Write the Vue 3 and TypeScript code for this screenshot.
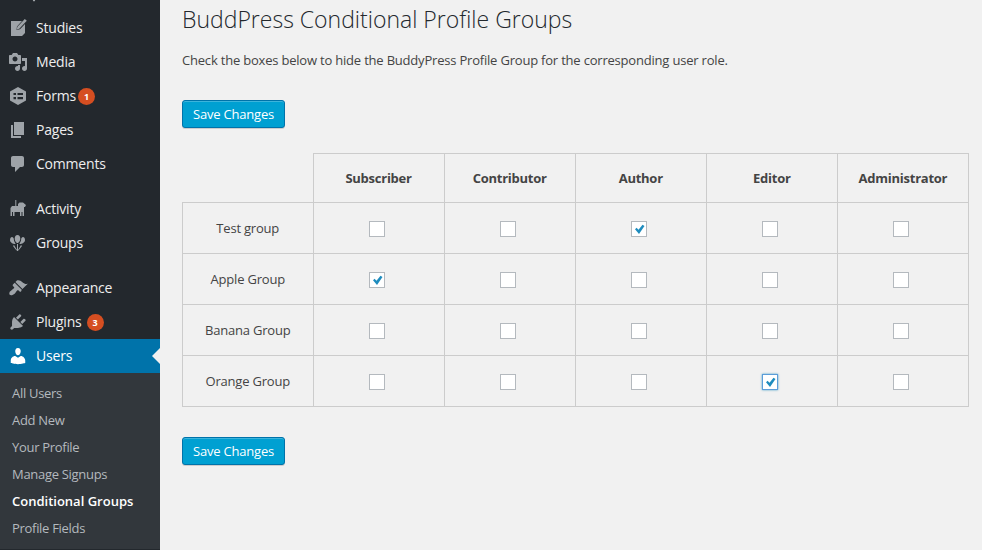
<template>
  <div class="page">
    <aside class="sidebar">
      <div class="menu-top">
        <svg class="cut-icon" viewBox="0 0 20 20"><path d="M3 0h14v8H3z" /></svg>
      </div>

      <nav v-for="(group, g) in menu" :key="g" class="menu-group">
        <a v-for="item in group" :key="item.label" class="menu-item" :class="{ current: item.current }">
          <svg class="menu-icon" viewBox="0 0 20 20"><path :d="item.icon" /></svg>
          <span class="label">{{ item.label }}</span>
          <span v-if="item.badge" class="badge" :class="{ tight: item.tight }">{{ item.badge }}</span>
        </a>
      </nav>

      <ul class="submenu">
        <li v-for="sub in subItems" :key="sub" :class="{ active: sub === 'Conditional Groups' }">{{ sub }}</li>
      </ul>
    </aside>

    <main class="content">
      <h1>BuddPress Conditional Profile Groups</h1>
      <p>Check the boxes below to hide the BuddyPress Profile Group for the corresponding user role.</p>
      <button class="save" type="button">Save Changes</button>

      <table>
        <thead>
          <tr>
            <th class="corner"></th>
            <th v-for="role in roles" :key="role">{{ role }}</th>
          </tr>
        </thead>
        <tbody>
          <tr v-for="row in rows" :key="row.name">
            <td class="name">{{ row.name }}</td>
            <td v-for="(role, i) in roles" :key="role">
              <span class="check" :class="{ focused: row.focus === i }">
                <svg v-if="row.checked === i" viewBox="0 0 16 16"><path d="M4 8.2L5.6 6.800 7.500 8.700 11.500 3.800 13.500 5 8 13z" /></svg>
              </span>
            </td>
          </tr>
        </tbody>
      </table>

      <button class="save" type="button">Save Changes</button>
    </main>
  </div>
</template>

<script setup lang="ts">
interface MenuItem {
  label: string;
  icon: string;
  badge?: number;
  tight?: boolean;
  current?: boolean;
}

interface Row {
  name: string;
  checked?: number;
  focus?: number;
}

const menu: MenuItem[][] = [
  [
    {
      label: 'Studies',
      icon: 'M3 3h11l-5 5.5-.5 3.5 3.5-.8L17 6v9l-3 3H3zM16.8 1l2 1.8-7.5 8-2.5.7.6-2.700z',
    },
    {
      label: 'Media',
      icon: 'M13 11V4c0-.55-.45-1-1-1h-1.67L9 1H5L3.67 3H2c-.55 0-1 .45-1 1v7c0 .55.45 1 1 1h10c.55 0 1-.45 1-1zM7 4.5c1.38 0 2.5 1.12 2.5 2.5S8.38 9.5 7 9.5 4.5 8.38 4.5 7 5.62 4.5 7 4.5zM14 6h5v10.5c0 1.38-1.12 2.5-2.5 2.5S14 17.88 14 16.5s1.12-2.5 2.5-2.5c.17 0 .34.02.5.05V9h-3V6zm-4 8.05V13h2v3.5c0 1.38-1.12 2.5-2.5 2.5S7 17.88 7 16.5 8.12 14 9.5 14c.17 0 .34.02.5.05z',
    },
    {
      label: 'Forms',
      icon: 'M10 1l8 4.5v9L10 19l-8-4.5v-9zM5.5 7v2H8V7zM9.5 7v2H15V7zM5.5 11v2.2H8V11zM9.5 11v2.2H15V11z',
      badge: 1,
      tight: true,
    },
    { label: 'Pages', icon: 'M6 15V2h10v13H6zm-1 1h8v2H3V5h2v11z' },
    {
      label: 'Comments',
      icon: 'M5 2h9c1.1 0 2 .9 2 2v7c0 1.1-.9 2-2 2h-2l-5 5v-5H5c-1.1 0-2-.9-2-2V4c0-1.1.9-2 2-2z',
    },
  ],
  [
    {
      label: 'Activity',
      icon: 'M7.3 1h1v6H10V5l1.5-1.5H15l3 2.500-1 2H16V17h-1.500v-4h-1v4H12v-4H6.500v4H5v-4H4v4H2.500V9L4 7h3.300z',
    },
    {
      label: 'Groups',
      icon: 'M9.5 2c1.800 0 2.800 1.700 2.800 3.500S11 10 9.500 10 6.700 7.300 6.700 5.500 7.700 2 9.500 2zM4 4c1 0 1.800 1 1.800 2 0 1.800 1 3.600 1.800 4.500l-.4.600C5 11 2 9.500 2 7c0-1.700 1-3 2-3zM15 4c-1 0-1.800 1-1.800 2 0 1.800-1 3.600-1.800 4.500l.4.600C14 11 17 9.500 17 7c0-1.700-1-3-2-3zM9 11h1v7H9zM6 12l3 5-.5.5L5 13zM13 12l-3 5 .5.5L14 13z',
    },
  ],
  [
    {
      label: 'Appearance',
      icon: 'M14.48 11.06L7.41 3.99l1.5-1.5c.5-.56 2.3-.47 3.51.32 1.21.8 1.43 1.28 2.91 2.1 1.18.64 2.45 1.26 4.45.85zm-.71.71L6.7 4.7 4.93 6.47c-.39.39-.39 1.02 0 1.41l1.06 1.06c.39.39.39 1.03 0 1.42-.6.6-1.43 1.11-2.21 1.69-.35.26-.7.53-1.01.84C1.43 13.23.78 15.82 1.75 16.79c.97.97 3.53.31 4.88-1.04.31-.31.58-.66.85-1.02.57-.78 1.08-1.61 1.69-2.21.39-.39 1.02-.39 1.41 0l1.06 1.06c.39.39 1.02.39 1.41 0z',
    },
    {
      label: 'Plugins',
      icon: 'M13.11 4.36L9.87 7.6 8 5.73l3.24-3.24c.35-.34 1.05-.2 1.56.32.52.51.66 1.21.31 1.55zm-8 1.77l.91-1.12 9.01 9.01-1.19.84c-.71.71-2.63 1.16-3.82 1.16H6.14L4.9 17.26c-.59.59-1.54.59-2.12 0-.59-.58-.59-1.53 0-2.12l1.24-1.24v-3.88c0-1.13.4-3.19 1.09-3.89zm7.26 3.97l3.24-3.24c.34-.35 1.04-.21 1.55.31.52.51.66 1.21.31 1.55l-3.24 3.25z',
      badge: 3,
    },
    {
      label: 'Users',
      icon: 'M10 9.25c-2.27 0-2.73-3.44-2.73-3.44C7 4.02 7.82 2 9.97 2c2.16 0 2.98 2.02 2.71 3.81 0 0-.41 3.44-2.68 3.44zm0 2.57L12.72 10c2.39 0 4.52 2.33 4.52 4.53v2.49s-3.65 1.13-7.24 1.13c-3.65 0-7.24-1.13-7.24-1.13v-2.49c0-2.25 1.94-4.48 4.47-4.48z',
      current: true,
    },
  ],
];

const subItems = ['All Users', 'Add New', 'Your Profile', 'Manage Signups', 'Conditional Groups', 'Profile Fields'];

const roles = ['Subscriber', 'Contributor', 'Author', 'Editor', 'Administrator'];

const rows: Row[] = [
  { name: 'Test group', checked: 2 },
  { name: 'Apple Group', checked: 0 },
  { name: 'Banana Group' },
  { name: 'Orange Group', checked: 3, focus: 3 },
];
</script>

<style>
html,
body {
  margin: 0;
  overflow: hidden;
  background: #f1f1f1;
}
</style>

<style scoped>
.page {
  display: flex;
  height: 550px;
  overflow: hidden;
  font-family: 'Open Sans', 'Liberation Sans', sans-serif;
  font-size: 13px;
  letter-spacing: -0.2px;
  color: #444;
  background: #f1f1f1;
}

.sidebar {
  flex: 0 0 160px;
  background: #23282d;
}

.menu-top {
  height: 11px;
  overflow: hidden;
}

.cut-icon {
  display: block;
  width: 8px;
  height: 3px;
  margin-left: 30px;
  fill: #9ea3a8;
}

.menu-group {
  margin-bottom: 11px;
}

.menu-group:last-of-type {
  margin-bottom: 0;
}

.menu-item {
  position: relative;
  display: flex;
  align-items: center;
  height: 34px;
  padding-left: 8px;
  font-size: 14px;
  color: #eee;
}

.menu-icon {
  width: 20px;
  height: 20px;
  margin-right: 8px;
  fill: #9ea3a8;
}

.label {
  margin-bottom: 2px;
}

.menu-item.current {
  background: #0073aa;
  color: #fff;
}

.menu-item.current .menu-icon {
  fill: #fff;
}

.menu-item.current::after {
  content: '';
  position: absolute;
  right: 0;
  top: 9px;
  border: 8px solid transparent;
  border-left-width: 0;
  border-right-color: #f1f1f1;
}

.badge {
  width: 17px;
  height: 17px;
  margin-left: 5px;
  border-radius: 50%;
  background: #d54e21;
  color: #fff;
  font-size: 9px;
  font-weight: 700;
  letter-spacing: 0;
  line-height: 17px;
  text-align: center;
}

.badge.tight {
  margin-left: 2px;
}

.submenu {
  margin: 0;
  padding: 7px 0;
  list-style: none;
  background: #32373c;
}

.submenu li {
  height: 27px;
  padding-left: 12px;
  color: #b4b9be;
  letter-spacing: -0.3px;
  line-height: 27px;
}

.submenu li.active {
  color: #fff;
  font-weight: 600;
  letter-spacing: 0;
}

.content {
  flex: 1;
  padding-left: 22px;
}

h1 {
  margin: 4px 0 0;
  color: #23282d;
  font-size: 23px;
  font-weight: 300;
  letter-spacing: 0;
  line-height: 30px;
}

p {
  margin: 16px 0 0;
  line-height: 20px;
}

.save {
  display: block;
  box-sizing: border-box;
  height: 28px;
  padding: 0 10px 1px;
  border: 1px solid #0073aa;
  border-radius: 3px;
  background: #00a0d2;
  box-shadow: inset 0 1px 0 rgba(120, 200, 230, 0.5), 0 1px 0 rgba(0, 0, 0, 0.15);
  color: #fff;
  font-family: inherit;
  font-size: 13px;
  letter-spacing: -0.2px;
  line-height: 26px;
}

p + .save {
  margin-top: 30px;
}

table {
  width: 787px;
  margin: 25px 0 30px;
  border-collapse: collapse;
  table-layout: fixed;
}

th,
td {
  border: 1px solid #ccc;
  text-align: center;
}

th {
  height: 48px;
  padding: 0;
  color: #444;
  font-size: 13px;
  font-weight: 700;
  letter-spacing: -0.25px;
}

th.corner {
  width: 130px;
  border-top: none;
  border-left: none;
}

td {
  height: 50px;
  padding: 0;
}

.check {
  display: inline-flex;
  box-sizing: border-box;
  width: 16px;
  height: 16px;
  margin-right: 4px;
  border: 1px solid #b4b9be;
  background: #fff;
  vertical-align: middle;
}

.check svg {
  display: block;
  width: 16px;
  height: 16px;
  margin: -1px;
  fill: #1e8cbe;
}

.check.focused {
  border-color: #5b9dd9;
  box-shadow: 0 0 2px rgba(30, 140, 190, 0.8);
}
</style>
